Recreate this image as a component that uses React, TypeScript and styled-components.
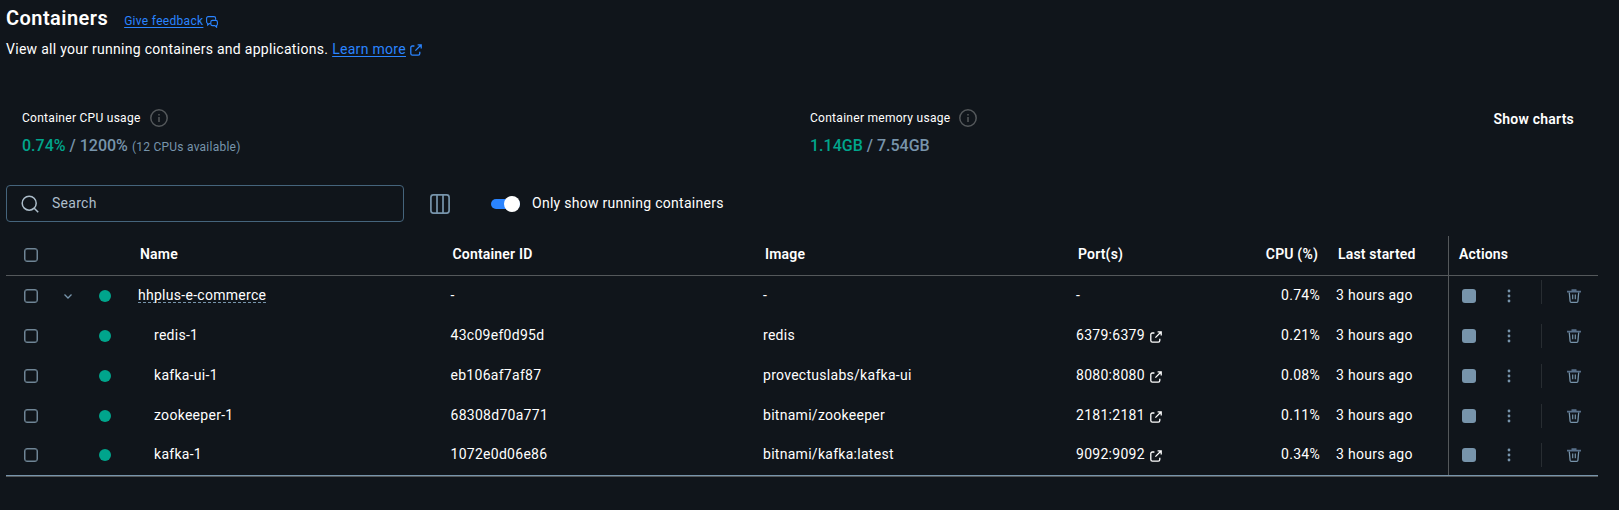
import React from "react";
import styled, { createGlobalStyle } from "styled-components";

const GlobalStyle = createGlobalStyle`
  * { box-sizing: border-box; }
  html, body { margin: 0; background: #10151b; }
  body {
    font-family: Roboto, "Liberation Sans", sans-serif;
    font-size: 14px;
    font-weight: 450;
    line-height: 20px;
    letter-spacing: 0.28px;
    color: #fff;
    overflow: hidden;
  }
`;

const Page = styled.main`
  height: 510px;
  padding: 6px 21px 0 6px;
  background: #10151b;
`;

const TitleRow = styled.div`
  display: flex;
  align-items: flex-start;
  height: 33px;
`;

const Title = styled.h1`
  margin: 0 16px 0 0;
  font-size: 20px;
  line-height: 24px;
  font-weight: 600;
  letter-spacing: 0.45px;
`;

const Link = styled.a<{ $small?: boolean }>`
  display: inline-flex;
  align-items: center;
  gap: ${(p) => (p.$small ? 2.5 : 4.5)}px;
  color: #2a84ff;
  font-size: ${(p) => (p.$small ? 12 : 14)}px;
  line-height: 20px;
  letter-spacing: 0.3px;
  margin-top: ${(p) => (p.$small ? 5 : 0)}px;
  span { text-decoration: underline; text-underline-offset: 2px; }
  svg { position: relative; top: 1px; }
`;

const Intro = styled.p`
  display: flex;
  align-items: flex-start;
  gap: 4px;
  margin: 0;
  height: 67px;
`;

const Stats = styled.section`
  display: grid;
  grid-template-columns: 788px 1fr auto;
  padding: 0 24px 0 16px;
  height: 79px;
`;

const StatLabel = styled.div`
  display: flex;
  align-items: center;
  gap: 9px;
  height: 24px;
  font-size: 12px;
  letter-spacing: 0.28px;
`;

const StatValue = styled.div`
  display: flex;
  align-items: baseline;
  gap: 4px;
  margin-top: 6px;
  font-size: 16px;
  font-weight: 500;
  letter-spacing: 0;
  color: #7794ab;
  b { font-weight: 500; color: #00a58c; }
  small { font-size: 12px; font-weight: 400; letter-spacing: 0.24px; }
`;

const ChartsButton = styled.button`
  height: 26px;
  padding: 0;
  border: 0;
  background: none;
  color: #fff;
  font: 600 14px/26px Roboto, sans-serif;
  letter-spacing: 0.22px;
`;

const Toolbar = styled.div`
  display: flex;
  align-items: center;
  height: 37px;
`;

const SearchBox = styled.div`
  display: flex;
  align-items: center;
  gap: 13px;
  width: 398px;
  height: 37px;
  padding-left: 14px;
  margin-right: 26px;
  border: 1px solid #45647c;
  border-radius: 4px;
  color: #adbecb;
`;

const ToolbarText = styled.span`
  padding-bottom: 2px;
`;

const Switch = styled.div`
  display: flex;
  align-items: center;
  justify-content: flex-end;
  width: 29px;
  height: 10px;
  margin: 0 12px 0 41px;
  border-radius: 5px;
  background: #2a84ff;
  &::after {
    content: "";
    width: 16px;
    height: 16px;
    border-radius: 50%;
    background: #fff;
  }
`;

const Table = styled.section`
  margin-top: 14px;
  border-bottom: 1px solid #54585b;
`;

const Row = styled.div<{ $head?: boolean }>`
  display: grid;
  grid-template-columns: 49px 26px 57px 312.5px 312.5px 313px 184px 60px 128px 1fr;
  height: 40px;
  font-weight: ${(p) => (p.$head ? 600 : 450)};
  letter-spacing: ${(p) => (p.$head ? 0.18 : 0.28)}px;
  border-bottom: ${(p) => (p.$head ? "1px solid #54585b" : "0")};
  &:last-child { border-bottom: 1px solid #7794ab; }
`;

const Cell = styled.div<{ $indent?: number; $end?: number }>`
  display: flex;
  align-items: center;
  justify-content: ${(p) => (p.$end === undefined ? "flex-start" : "flex-end")};
  gap: 5px;
  padding: 0 ${(p) => p.$end ?? 0}px 2px ${(p) => p.$indent ?? 0}px;
  white-space: nowrap;
  svg { margin-top: 3px; }
  ${Row}:first-child > &, ${Row}:last-child > & { padding-bottom: 3px; }
`;

const IconCell = styled(Cell)`
  padding-bottom: 0;
  svg { margin-top: 1px; }
  ${Row}:first-child > &, ${Row}:last-child > & { padding-bottom: 1px; }
`;

const ActionsCell = styled(Cell)<{ $icons?: boolean }>`
  gap: 0;
  border-left: 1px solid #54585b;
  padding-bottom: ${(p) => (p.$icons ? 0 : 2)}px;
  svg { margin-top: 0; }
  ${Row}:last-child > & { padding-bottom: 1px; }
`;

const Checkbox = styled.span`
  width: 14px;
  height: 14px;
  border: 1.5px solid #6f8596;
  border-radius: 3px;
  box-shadow: inset 0 0 0 0.5px #6f8596;
`;

const StatusDot = styled.span`
  width: 12px;
  height: 12px;
  border-radius: 50%;
  background: #00a58c;
`;

const GroupName = styled.span`
  line-height: 14px;
  border-bottom: 1px dashed #7794ab;
`;

const StopIcon = styled.span`
  width: 14px;
  height: 14px;
  margin-right: 31px;
  border-radius: 3px;
  background: #7794ab;
`;

const Divider = styled.span<{ $raised?: boolean }>`
  width: 1px;
  height: 24px;
  margin: ${(p) => (p.$raised ? -8 : 0)}px 25px 0 30px;
  background: #282d32;
`;

const External = () => (
  <svg width="12" height="12" viewBox="0 0 12 12" fill="none" stroke="currentColor" strokeWidth="1.3">
    <path d="M4.400 2H2.400Q.8 2 .8 3.600v6q0 1.600 1.600 1.600h5.800q1.600 0 1.600-1.600V7.800M7.600.8h3.600v3.600M11 1 5.400 6.600" />
  </svg>
);

const Feedback = () => (
  <svg width="12" height="12" viewBox="0 0 12 12" fill="none" stroke="currentColor" strokeWidth="1.1">
    <path d="M4.600 7.600H3.400L1.700 9V7.400Q.6 7 .6 5.800V2.300Q.6.6 2.300.6h5.600q1.700 0 1.700 1.700v1.500" />
    <path d="M6.500 4.400h3.200q1.700 0 1.700 1.700v1.800q0 1.200-.8 1.500v1.800L8.900 9.600H6.500q-1.700 0-1.700-1.700V6.100q0-1.700 1.700-1.700z" />
  </svg>
);

const Info = () => (
  <svg width="18" height="18" viewBox="0 0 18 18" fill="none" stroke="#54585b" strokeWidth="1.5">
    <circle cx="9" cy="9" r="8.200" />
    <path d="M9 8v5M9 5v1.600" />
  </svg>
);

const SearchIcon = () => (
  <svg width="18" height="18" viewBox="0 0 18 18" fill="none" stroke="currentColor" strokeWidth="1.5">
    <circle cx="8.200" cy="8.200" r="7" />
    <path d="m13.200 13.200 4 4" />
  </svg>
);

const Columns = () => (
  <svg width="20" height="20" viewBox="0 0 20 20" fill="none" stroke="#7794ab" strokeWidth="1.7">
    <rect x=".9" y=".9" width="18.200" height="18.200" rx="2.500" />
    <path d="M7 1v18M13 1v18" />
  </svg>
);

const Chevron = () => (
  <svg width="8" height="5" viewBox="0 0 8 5" fill="none" stroke="#7794ab" strokeWidth="1.300">
    <path d="m.5.5L4 4 7.500.5" />
  </svg>
);

const Dots = () => (
  <svg width="4" height="14" viewBox="0 0 4 14" fill="#7794ab">
    <circle cx="2" cy="2" r="1.400" />
    <circle cx="2" cy="7" r="1.400" />
    <circle cx="2" cy="12" r="1.400" />
  </svg>
);

const Trash = () => (
  <svg width="14" height="14" viewBox="0 0 14 14" fill="none" stroke="#7794ab">
    <path d="M0 2.700h14M4.500 1h5" stroke="#58708a" strokeWidth="1.700" />
    <path d="m2.300 3.500.8 8.700q.1 1.100 1.200 1.100h5.400q1.100 0 1.200-1.100l.8-8.700" strokeWidth="1.300" />
    <path d="M5.700 5.500v4.800M8.300 5.500v4.800" strokeWidth="1.200" />
  </svg>
);

const rows = [
  { name: "hhplus-e-commerce", id: "-", image: "-", port: "-", cpu: "0.74%", group: true },
  { name: "redis-1", id: "43c09ef0d95d", image: "redis", port: "6379:6379", cpu: "0.21%" },
  { name: "kafka-ui-1", id: "eb106af7af87", image: "provectuslabs/kafka-ui", port: "8080:8080", cpu: "0.08%" },
  { name: "zookeeper-1", id: "68308d70a771", image: "bitnami/zookeeper", port: "2181:2181", cpu: "0.11%" },
  { name: "kafka-1", id: "1072e0d06e86", image: "bitnami/kafka:latest", port: "9092:9092", cpu: "0.34%" },
];

export default function App() {
  return (
    <Page>
      <GlobalStyle />
      <TitleRow>
        <Title>Containers</Title>
        <Link $small><span>Give feedback</span><Feedback /></Link>
      </TitleRow>
      <Intro>
        View all your running containers and applications.
        <Link><span>Learn more</span><External /></Link>
      </Intro>
      <Stats>
        <div>
          <StatLabel>Container CPU usage <Info /></StatLabel>
          <StatValue><b>0.74%</b> / 1200% <small>(12 CPUs available)</small></StatValue>
        </div>
        <div>
          <StatLabel>Container memory usage <Info /></StatLabel>
          <StatValue><b>1.14GB</b> / 7.54GB</StatValue>
        </div>
        <ChartsButton>Show charts</ChartsButton>
      </Stats>
      <Toolbar>
        <SearchBox><SearchIcon /><ToolbarText>Search</ToolbarText></SearchBox>
        <Columns />
        <Switch />
        <ToolbarText>Only show running containers</ToolbarText>
      </Toolbar>
      <Table>
        <Row $head>
          <IconCell $indent={18}><Checkbox /></IconCell>
          <Cell /><Cell />
          <Cell $indent={2}>Name</Cell>
          <Cell $indent={2}>Container ID</Cell>
          <Cell $indent={2}>Image</Cell>
          <Cell $indent={2}>Port(s)</Cell>
          <Cell $end={2}>CPU (%)</Cell>
          <Cell $indent={18}>Last started</Cell>
          <ActionsCell $indent={10}>Actions</ActionsCell>
        </Row>
        {rows.map((r) => (
          <Row key={r.name}>
            <IconCell $indent={18}><Checkbox /></IconCell>
            <IconCell $indent={9}>{r.group && <Chevron />}</IconCell>
            <IconCell $indent={18}><StatusDot /></IconCell>
            <Cell $indent={r.group ? 0 : 16}>{r.group ? <GroupName>{r.name}</GroupName> : r.name}</Cell>
            <Cell>{r.id}</Cell>
            <Cell>{r.image}</Cell>
            <Cell>{r.port}{!r.group && <External />}</Cell>
            <Cell $end={0}>{r.cpu}</Cell>
            <Cell $indent={16}>3 hours ago</Cell>
            <ActionsCell $indent={13} $icons><StopIcon /><Dots /><Divider $raised={r.group} /><Trash /></ActionsCell>
          </Row>
        ))}
      </Table>
    </Page>
  );
}
